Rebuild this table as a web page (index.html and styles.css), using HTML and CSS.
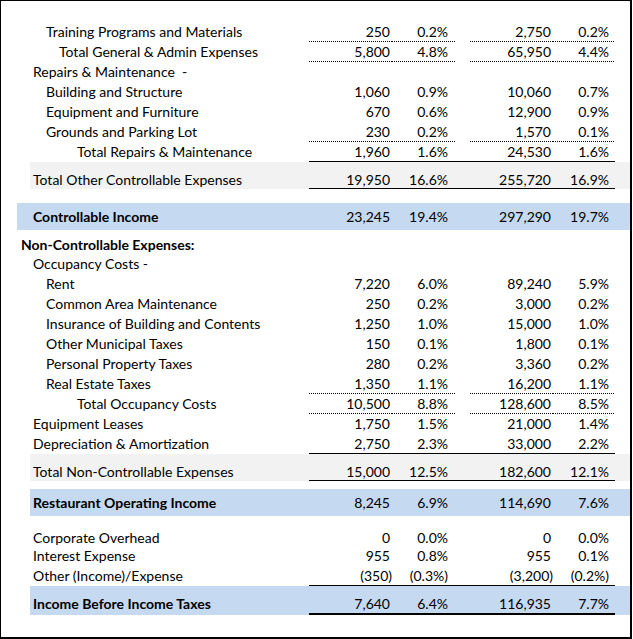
FILE: index.html
```html
<!DOCTYPE html>
<html lang="en">
<head>
<meta charset="utf-8">
<title>Operating Statement</title>
<link rel="stylesheet" href="styles.css">
</head>
<body>
<div class="sheet">
  <div class="row dot"><span class="lbl l2">Training Programs and Materials</span><span class="n">250</span><span class="p">0.2%</span><span class="g"></span><span class="n">2,750</span><span class="p">0.2%</span></div>
  <div class="row dot"><span class="lbl l3">Total General &amp; Admin Expenses</span><span class="n">5,800</span><span class="p">4.8%</span><span class="g"></span><span class="n">65,950</span><span class="p">4.4%</span></div>
  <div class="row"><span class="lbl l1">Repairs &amp; Maintenance &nbsp;-</span></div>
  <div class="row"><span class="lbl l2">Building and Structure</span><span class="n">1,060</span><span class="p">0.9%</span><span class="g"></span><span class="n">10,060</span><span class="p">0.7%</span></div>
  <div class="row"><span class="lbl l2">Equipment and Furniture</span><span class="n">670</span><span class="p">0.6%</span><span class="g"></span><span class="n">12,900</span><span class="p">0.9%</span></div>
  <div class="row dot"><span class="lbl l2">Grounds and Parking Lot</span><span class="n">230</span><span class="p">0.2%</span><span class="g"></span><span class="n">1,570</span><span class="p">0.1%</span></div>
  <div class="row rule"><span class="lbl l4">Total Repairs &amp; Maintenance</span><span class="n">1,960</span><span class="p">1.6%</span><span class="g"></span><span class="n">24,530</span><span class="p">1.6%</span></div>
  <div class="row total rule"><span class="lbl l1">Total Other Controllable Expenses</span><span class="n">19,950</span><span class="p">16.6%</span><span class="g"></span><span class="n">255,720</span><span class="p">16.9%</span></div>
  <div class="spacer s14"></div>
  <div class="row income wide"><span class="lbl l1 b">Controllable Income</span><span class="n">23,245</span><span class="p">19.4%</span><span class="g"></span><span class="n">297,290</span><span class="p">19.7%</span></div>
  <div class="row head"><span class="lbl hd b">Non-Controllable Expenses:</span></div>
  <div class="row"><span class="lbl l1">Occupancy Costs -</span></div>
  <div class="row"><span class="lbl l2">Rent</span><span class="n">7,220</span><span class="p">6.0%</span><span class="g"></span><span class="n">89,240</span><span class="p">5.9%</span></div>
  <div class="row"><span class="lbl l2">Common Area Maintenance</span><span class="n">250</span><span class="p">0.2%</span><span class="g"></span><span class="n">3,000</span><span class="p">0.2%</span></div>
  <div class="row"><span class="lbl l2">Insurance of Building and Contents</span><span class="n">1,250</span><span class="p">1.0%</span><span class="g"></span><span class="n">15,000</span><span class="p">1.0%</span></div>
  <div class="row"><span class="lbl l2">Other Municipal Taxes</span><span class="n">150</span><span class="p">0.1%</span><span class="g"></span><span class="n">1,800</span><span class="p">0.1%</span></div>
  <div class="row"><span class="lbl l2">Personal Property Taxes</span><span class="n">280</span><span class="p">0.2%</span><span class="g"></span><span class="n">3,360</span><span class="p">0.2%</span></div>
  <div class="row dot"><span class="lbl l2">Real Estate Taxes</span><span class="n">1,350</span><span class="p">1.1%</span><span class="g"></span><span class="n">16,200</span><span class="p">1.1%</span></div>
  <div class="row dot"><span class="lbl l4">Total Occupancy Costs</span><span class="n">10,500</span><span class="p">8.8%</span><span class="g"></span><span class="n">128,600</span><span class="p">8.5%</span></div>
  <div class="row"><span class="lbl l1">Equipment Leases</span><span class="n">1,750</span><span class="p">1.5%</span><span class="g"></span><span class="n">21,000</span><span class="p">1.4%</span></div>
  <div class="row rule"><span class="lbl l1">Depreciation &amp; Amortization</span><span class="n">2,750</span><span class="p">2.3%</span><span class="g"></span><span class="n">33,000</span><span class="p">2.2%</span></div>
  <div class="row total rule"><span class="lbl l1">Total Non-Controllable Expenses</span><span class="n">15,000</span><span class="p">12.5%</span><span class="g"></span><span class="n">182,600</span><span class="p">12.1%</span></div>
  <div class="spacer s8"></div>
  <div class="row income"><span class="lbl l1 b">Restaurant Operating Income</span><span class="n">8,245</span><span class="p">6.9%</span><span class="g"></span><span class="n">114,690</span><span class="p">7.6%</span></div>
  <div class="spacer s12"></div>
  <div class="row"><span class="lbl l1">Corporate Overhead</span><span class="n">0</span><span class="p">0.0%</span><span class="g"></span><span class="n">0</span><span class="p">0.0%</span></div>
  <div class="row short"><span class="lbl l1">Interest Expense</span><span class="n">955</span><span class="p">0.8%</span><span class="g"></span><span class="n">955</span><span class="p">0.1%</span></div>
  <div class="row rule"><span class="lbl l1">Other (Income)/Expense</span><span class="n neg">(350)</span><span class="p">(0.3%)</span><span class="g"></span><span class="n neg">(3,200)</span><span class="p">(0.2%)</span></div>
  <div class="row income final"><span class="lbl l1 b">Income Before Income Taxes</span><span class="n">7,640</span><span class="p">6.4%</span><span class="g"></span><span class="n">116,935</span><span class="p">7.7%</span></div>
</div>
</body>
</html>
```
FILE: styles.css
```css
body {
  margin: 0;
  background: #fff;
}

.sheet {
  box-sizing: border-box;
  width: 632px;
  height: 639px;
  border: solid #000;
  border-width: 1px 2px 2px 1px;
  padding: 21px 0 0 29px;
  font-family: Lato, "Open Sans", sans-serif;
  font-size: 14px;
  font-variant-numeric: tabular-nums;
  color: #000;
  overflow: hidden;
}

.row {
  display: grid;
  grid-template-columns: 279px 83px 63px 15px 83px 62px;
  box-sizing: border-box;
  height: 20px;
  padding-top: 2px;
  line-height: 16px;
  white-space: nowrap;
}

.row > span:nth-child(6) {
  padding-right: 6px;
}

.lbl {
  overflow: visible;
}

.l1 { padding-left: 3px; }
.l2 { padding-left: 16px; }
.l3 { padding-left: 29px; }
.l4 { padding-left: 47px; }
.hd { margin-left: -9px; }
.b { font-weight: 700; }

.n {
  text-align: right;
  padding-right: 2px;
}

.n.neg {
  padding-right: 0;
}

.p {
  text-align: right;
  padding-right: 7px;
}

.dot > .n,
.dot > .p {
  background-image: linear-gradient(90deg, #000 1px, transparent 1px);
  background-size: 2px 1px;
  background-repeat: repeat-x;
  background-position: left bottom;
}

.rule > .n,
.rule > .p,
.rule > .g {
  box-shadow: inset 0 -1px 0 #000;
}

.total {
  height: 27px;
  padding-top: 10px;
  background: #f2f2f2;
}

.income {
  height: 27px;
  padding-top: 6px;
  background: #c5d9f1;
}

.wide {
  margin-left: -13px;
  grid-template-columns: 292px 83px 63px 15px 83px 62px;
}

.wide > .l1 {
  padding-left: 16px;
}

.head {
  height: 24px;
  padding-top: 7px;
}

.short {
  height: 18px;
  padding-top: 0;
}

.final {
  height: 29px;
  padding-top: 10px;
}

.final > .n,
.final > .p,
.final > .g {
  box-shadow: inset 0 -2px 0 #000;
}

.spacer { height: 14px; }
.spacer.s8 { height: 8px; }
.spacer.s12 { height: 12px; }
```
